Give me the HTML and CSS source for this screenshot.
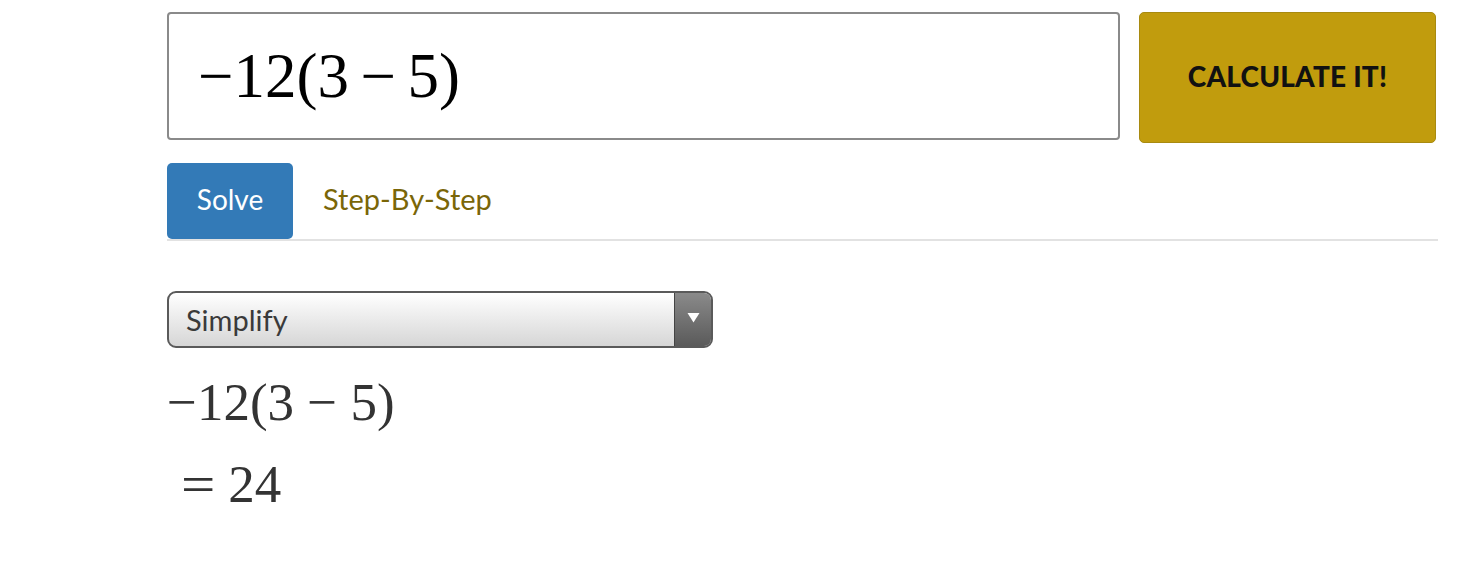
FILE: index.html
```html
<!DOCTYPE html>
<html>
<head>
<meta charset="utf-8">
<link rel="stylesheet" href="styles.css">
</head>
<body>
<div class="page">
  <div class="input-row">
    <div class="expr-input">−12(3<span class="sp"> </span>−<span class="sp"> </span>5)</div>
    <button class="calc-btn">CALCULATE IT!</button>
  </div>
  <div class="tabs">
    <div class="tab active">Solve</div>
    <div class="tab">Step-By-Step</div>
  </div>
  <div class="select">
    <span class="select-label">Simplify</span>
    <span class="select-arrow"><svg width="13" height="11" viewBox="0 0 13 11"><path d="M0.5 1 L12.5 1 L6.5 10.5 Z" fill="#fff"/></svg></span>
  </div>
  <div class="result">
    <div class="res-line">−12(3 − 5)</div>
    <div class="res-line eq"><span class="eqsign">=</span> 24</div>
  </div>
</div>
</body>
</html>
```

FILE: styles.css
```css
html, body { margin: 0; padding: 0; background: #fff; }
.page { padding: 12px 23px 0 167px; }
.input-row { display: flex; align-items: flex-start; gap: 19px; }
.expr-input {
  width: 953px; height: 128px; box-sizing: border-box;
  border: 2px solid #8a8a8a; border-radius: 4px;
  font-family: "Liberation Serif", "Times New Roman", serif;
  font-size: 63px; color: #000;
  padding-left: 29px; line-height: 124px;
  display: flex; align-items: center;
}
.expr-input .sp { display: inline-block; width: 11.5px; }
.calc-btn {
  width: 297px; height: 131px; box-sizing: border-box;
  background: #c19c0d; border: 1px solid #a88a10; border-radius: 5px;
  font-family: Lato, "Noto Sans", sans-serif; font-weight: 900;
  font-size: 28px; color: #111; letter-spacing: 0.2px;
  padding: 0 0 4px 0; margin: 0;
}
.tabs {
  display: flex; margin-top: 20px; border-bottom: 2px solid #e2e2e2;
  width: 1271px; height: 76px;
}
.tab {
  font-family: Lato, "Noto Sans", sans-serif; font-size: 29px;
  color: #7a6608; padding: 0 28px 0 30px; line-height: 72px; height: 76px;
}
.tab.active {
  background: #337ab7; color: #fff; border-radius: 5px;
  width: 126px; box-sizing: border-box; text-align: center; padding: 0;
  margin-right: 0; font-size: 28px;
}
.select {
  margin-top: 50px; width: 546px; height: 57px; box-sizing: border-box;
  border: 2px solid #5a5a5a; border-radius: 9px; overflow: hidden;
  display: flex;
  background: linear-gradient(#ffffff, #d6d6d6);
}
.select-label {
  flex: 1; font-family: Lato, "Noto Sans", sans-serif; font-size: 29px;
  color: #3a3a3a; padding-left: 17px; line-height: 53px;
}
.select-arrow {
  width: 36px; border-left: 1px solid #444;
  background: linear-gradient(#8a8a8a, #5a5a5a);
  display: flex; align-items: center; justify-content: center;
  padding-bottom: 4px;
}
.result {
  font-family: "Liberation Serif", "Times New Roman", serif;
  font-size: 53px; color: #333; margin-top: 13px;
}
.res-line { line-height: 82px; height: 82px; }
.res-line.eq { padding-left: 14px; }
.eqsign { display: inline-block; transform: scaleX(1.15); transform-origin: left; margin-right: 4px; }
```
